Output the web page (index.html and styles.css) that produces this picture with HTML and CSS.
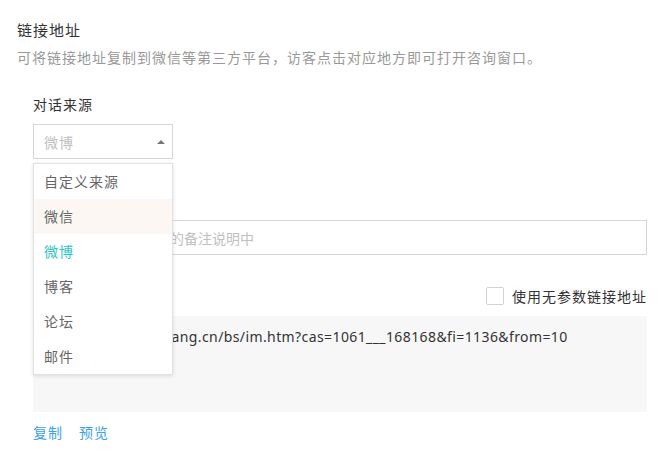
FILE: index.html
```html
<!DOCTYPE html>
<html lang="zh-CN">
<head>
<meta charset="utf-8">
<title>链接地址</title>
<link rel="stylesheet" href="styles.css">
</head>
<body>
<div class="page">
  <h2 class="title">链接地址</h2>
  <p class="desc">可将链接地址复制到微信等第三方平台，访客点击对应地方即可打开咨询窗口。</p>
  <div class="form">
    <div class="field">
      <div class="label">对话来源</div>
      <div class="select-wrap">
        <div class="select">
          <span class="select-text">微博</span>
          <span class="arrow"></span>
        </div>
        <ul class="dropdown">
          <li class="option">自定义来源</li>
          <li class="option hover">微信</li>
          <li class="option active">微博</li>
          <li class="option">博客</li>
          <li class="option">论坛</li>
          <li class="option">邮件</li>
        </ul>
      </div>
    </div>
    <div class="field field-note">
      <input class="text-input" type="text" placeholder="请输入将显示在链接的备注说明中">
    </div>
    <div class="field">
      <div class="row">
        <label class="check">
          <span class="box"></span>
          <span>使用无参数链接地址</span>
        </label>
      </div>
      <div class="url-box">http://www.kuaishang.cn/bs/im.htm?cas=1061___168168&amp;fi=1136&amp;from=10</div>
      <div class="links">
        <a class="link">复制</a>
        <a class="link">预览</a>
      </div>
    </div>
  </div>
</div>
</body>
</html>
```

FILE: styles.css
```css
* { box-sizing: border-box; }
html, body { margin: 0; padding: 0; background: #fff; }
body {
  font-family: "Noto Sans CJK SC", "Microsoft YaHei", sans-serif;
  font-size: 14px;
  line-height: 20px;
  letter-spacing: 1px;
  color: #333;
}
.page { padding: 20px 21px 0 17px; }
.title {
  margin: 0;
  font-size: 15px;
  font-weight: normal;
  line-height: 20px;
  color: #333;
}
.desc {
  margin: 7px 0 0;
  color: #999;
  font-size: 14px;
  line-height: 20px;
}
.form { padding-left: 16px; }
.field { margin-top: 31px; }
.field:first-child { margin-top: 27px; }
.field-note { margin-top: 61px; }
.label { line-height: 20px; color: #333; }
.select-wrap { position: relative; margin-top: 10px; width: 140px; }
.select {
  height: 35px;
  border: 1px solid #d6d6d6;
  display: flex;
  align-items: center;
  justify-content: space-between;
  padding: 0 7px 0 10px;
}
.select-text { color: #c0c0c0; }
.arrow {
  width: 0; height: 0;
  border-left: 4px solid transparent;
  border-right: 4px solid transparent;
  border-bottom: 4px solid #777;
}
.dropdown {
  position: absolute;
  top: 39px;
  left: 0;
  width: 140px;
  margin: 0;
  padding: 0;
  list-style: none;
  background: #fff;
  border: 1px solid #e2e2e2;
  box-shadow: 0 1px 4px rgba(0,0,0,0.12);
  z-index: 5;
}
.option {
  height: 35px;
  line-height: 35px;
  padding-left: 10px;
  color: #666;
}
.option.hover { background: #fcf7f3; }
.option.active { color: #2ec5c8; }
.text-input {
  display: block;
  width: 100%;
  height: 35px;
  border: 1px solid #d6d6d6;
  padding: 0 10px;
  font-family: "Noto Sans CJK SC", "Microsoft YaHei", sans-serif;
  font-size: 14px;
  color: #333;
  outline: none;
}
.text-input::placeholder { color: #c0c0c0; }
.row {
  display: flex;
  justify-content: flex-end;
  align-items: center;
  height: 20px;
}
.check { display: flex; align-items: center; gap: 8px; color: #333; }
.box {
  width: 18px; height: 18px;
  border: 1px solid #d2d2d2;
  border-radius: 2px;
  background: #fff;
}
.url-box {
  margin-top: 10px;
  height: 96px;
  background: #f7f7f7;
  padding: 11px 11px;
  font-family: "Noto Sans", "Noto Sans CJK SC", sans-serif;
  letter-spacing: 0.4px;
  color: #333;
  word-break: break-all;
}
.links { margin-top: 10px; display: flex; gap: 16px; }
.link { color: #3aa2ef; cursor: pointer; }
```
